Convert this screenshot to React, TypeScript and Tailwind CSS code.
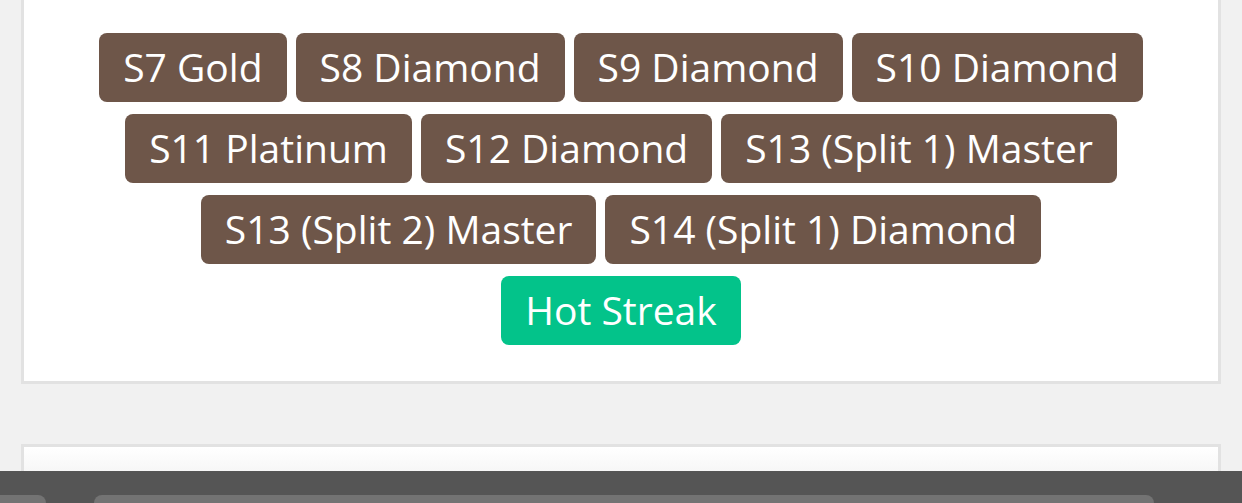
const ranks = [
  "S7 Gold",
  "S8 Diamond",
  "S9 Diamond",
  "S10 Diamond",
  "S11 Platinum",
  "S12 Diamond",
  "S13 (Split 1) Master",
  "S13 (Split 2) Master",
  "S14 (Split 1) Diamond",
];

function Badge({ label, green }: { label: string; green?: boolean }) {
  return (
    <span
      className={
        "flex h-[69px] items-center rounded-[8px] px-[24px] pb-[3px] text-[39px] leading-none text-white " +
        (green ? "bg-[#03c38a]" : "bg-[#6e5649]")
      }
    >
      {label}
    </span>
  );
}

export default function App() {
  return (
    <div
      className="flex h-[503px] flex-col overflow-hidden bg-[#f1f1f1]"
      style={{ fontFamily: '"Open Sans", "Noto Sans", sans-serif' }}
    >
      <div className="mx-[21px] border-x-[3px] border-b-[3px] border-[#e2e2e2] bg-white pt-[33px] pb-[36px]">
        <div className="flex flex-wrap justify-center gap-x-[9px] gap-y-[12px]">
          {ranks.map((r) => (
            <Badge key={r} label={r} />
          ))}
        </div>
        <div className="mt-[12px] flex justify-center">
          <Badge label="Hot Streak" green />
        </div>
      </div>

      <div className="mx-[21px] mt-[60px] flex-1 border-x-[3px] border-t-[3px] border-[#e2e2e2] bg-gradient-to-b from-white to-[#f7f7f7]" />

      <div className="flex h-[32px] shrink-0 items-end gap-[48px] bg-[#555555]">
        <div className="ml-[-60px] h-[8px] w-[106px] rounded-t-[20px] bg-[#737373]" />
        <div className="h-[8px] w-[1060px] rounded-t-[20px] bg-[#737373]" />
      </div>
    </div>
  );
}
